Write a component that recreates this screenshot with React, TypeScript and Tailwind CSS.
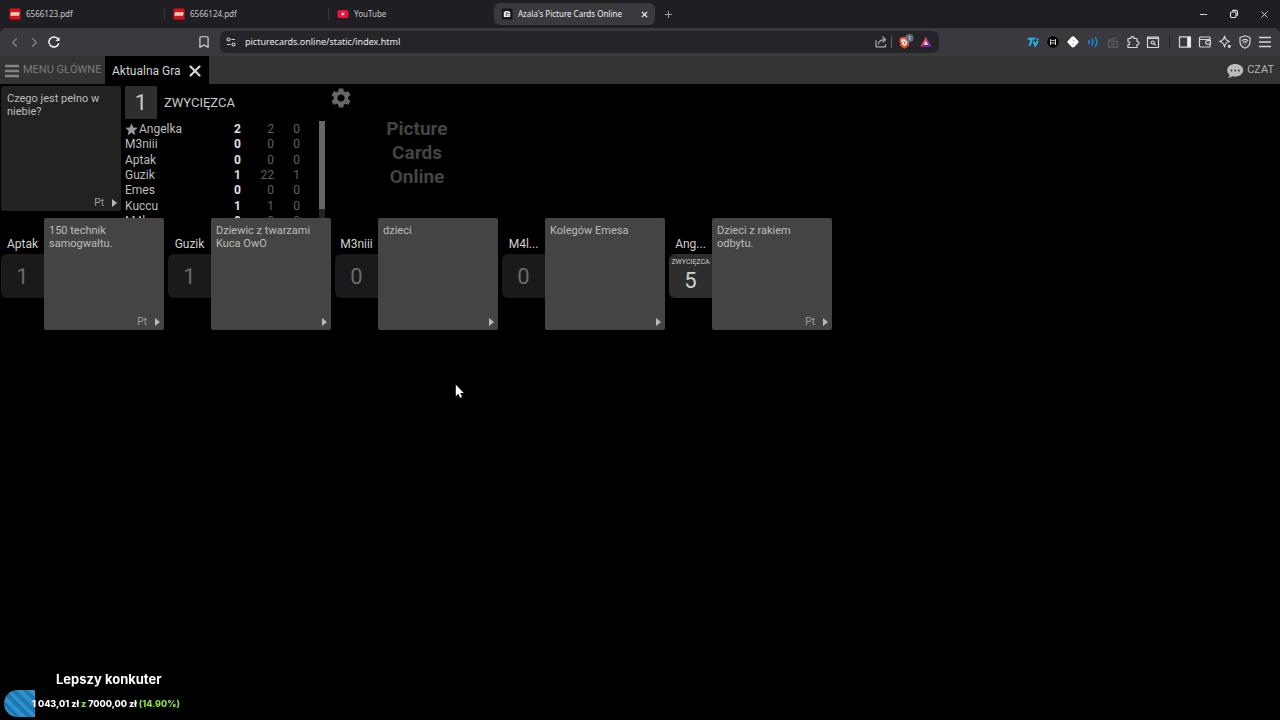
import type { ReactNode } from "react";
import {
  LuBookmark,
  LuChevronLeft,
  LuChevronRight,
  LuMinus,
  LuPlus,
  LuX,
} from "react-icons/lu";
import { MdSettings, MdStar } from "react-icons/md";

type Player = { name: string; points: number; played: number; won: number; leader?: boolean };
type Entry = { name: string; votes: number; text: string; pack?: boolean; winner?: boolean };

const players: Player[] = [
  { name: "Angelka", points: 2, played: 2, won: 0, leader: true },
  { name: "M3niii", points: 0, played: 0, won: 0 },
  { name: "Aptak", points: 0, played: 0, won: 0 },
  { name: "Guzik", points: 1, played: 22, won: 1 },
  { name: "Emes", points: 0, played: 0, won: 0 },
  { name: "Kuccu", points: 1, played: 1, won: 0 },
  { name: "M4lezer", points: 0, played: 0, won: 0 },
];

const entries: Entry[] = [
  { name: "Aptak", votes: 1, text: "150 technik samogwałtu.", pack: true },
  { name: "Guzik", votes: 1, text: "Dziewic z twarzami Kuca OwO" },
  { name: "M3niii", votes: 0, text: "dzieci" },
  { name: "M4l...", votes: 0, text: "Kolegów Emesa" },
  { name: "Ang...", votes: 5, text: "Dzieci z rakiem odbytu.", pack: true, winner: true },
];

function LegoIcon() {
  return (
    <svg viewBox="0 0 12 12" className="size-3 shrink-0" aria-hidden="true">
      <rect x=".5" y=".5" width="11" height="11" rx="1" fill="#d8121b" />
      <path d="M2 4.300h8.600L10 7.800H1.400z" fill="#f6dfc4" />
      <path d="M4 4.800 3.500 7.200M6.200 4.800l-.4 2.400M8.300 4.800l-.4 2.400" stroke="#d98a70" strokeWidth=".5" />
    </svg>
  );
}

function YoutubeIcon() {
  return (
    <svg viewBox="0 0 12 12" className="size-3 shrink-0" aria-hidden="true">
      <rect x=".5" y="2" width="11" height="8" rx="2" fill="#f0103c" />
      <path d="M4.8 4.2v3.6L8 6z" fill="#fff" />
    </svg>
  );
}

function Tab({ icon, title }: { icon: ReactNode; title: string }) {
  return (
    <div className="flex h-full w-[164px] items-center">
      <button className="flex min-w-0 flex-1 items-center gap-[5px] pl-2 text-left">
        {icon}
        <span className="truncate">{title}</span>
      </button>
      <span className="h-3 w-px bg-[#36353b]" />
    </div>
  );
}

function IconButton({ label, children }: { label: string; children: ReactNode }) {
  return (
    <button aria-label={label} className="flex h-5 w-5 shrink-0 items-center justify-center">
      {children}
    </button>
  );
}

function Glyph({ children }: { children: ReactNode }) {
  return (
    <svg
      viewBox="0 0 14 14"
      className="size-[14px]"
      fill="none"
      stroke="#d6d5da"
      strokeWidth="1.2"
      strokeLinecap="round"
      strokeLinejoin="round"
      aria-hidden="true"
    >
      {children}
    </svg>
  );
}

function Extensions() {
  return (
    <div className="flex items-center">
      <IconButton label="7TV">
        <svg viewBox="0 0 14 14" className="size-[14px]" fill="none" stroke="#29b6e8" strokeWidth="1.900" aria-hidden="true">
          <path d="M1.600 3.700h4.600L3.400 11M7.400 6.400l1.900 4.200 2.600-4.800M7.200 3.500h2.300M11 3.600l1.200 1.400" />
        </svg>
      </IconButton>
      <IconButton label="Cat">
        <svg viewBox="0 0 14 14" className="size-[14px]" aria-hidden="true">
          <circle cx="7" cy="7" r="5.800" fill="#000" />
          <path d="M4.500 10V4.300l1.200 1.300h2.600l1.200-1.300V10M4.500 8h5" fill="none" stroke="#e8e8e8" strokeWidth=".9" />
        </svg>
      </IconButton>
      <IconButton label="Diamond">
        <svg viewBox="0 0 14 14" className="size-[14px]" aria-hidden="true">
          <path d="M7 1.3c.6 0 1 .3 1.5.8l3.500 3.600c.8.8.8 1.600 0 2.400L8.500 11.800c-.9.9-2.100.9-3 0L2 8.100c-.8-.8-.8-1.600 0-2.400l3.500-3.600C6 1.600 6.400 1.300 7 1.300z" fill="#fff" />
          <path d="M6.500 4.800 8.700 6M6 8.600l1.500.8" fill="none" stroke="#9c9ca4" strokeWidth=".9" />
        </svg>
      </IconButton>
      <IconButton label="Sound">
        <svg viewBox="0 0 14 14" className="size-[14px]" fill="none" stroke="#1689d8" strokeWidth="1.500" strokeLinecap="round" aria-hidden="true">
          <path d="M2.800 5.500c.6 1 .6 2 0 3M6 4c1.300 2 1.300 4 0 6M9.300 2.600c2 2.800 2 6 0 8.800" />
        </svg>
      </IconButton>
      <IconButton label="Clapper">
        <svg viewBox="0 0 14 14" className="size-[14px]" fill="none" stroke="#5d5c62" strokeWidth="1.300" aria-hidden="true">
          <path d="M2.500 6.500h9v5.500h-9zM2.400 5.400l8.600-2.800M5 9.200h4" />
        </svg>
      </IconButton>
      <IconButton label="Extensions">
        <Glyph>
          <path d="M2 3.500h2.800c-.4-2.600 3.600-2.600 3.200 0h3v3c2.600-.4 2.600 3.400 0 3v3H2v-2.800c2.300.2 2.300-3.200 0-3z" />
        </Glyph>
      </IconButton>
      <IconButton label="Search tabs">
        <Glyph>
          <path d="M1.500 2h11v10.500h-11zM1.500 3.300h11" />
          <circle cx="6.800" cy="7.500" r="1.500" />
          <path d="m8 8.700 1.500 1.500" />
        </Glyph>
      </IconButton>
      <span className="mr-[5px] ml-[6px] h-3 w-px bg-[#222126]" />
      <IconButton label="Sidebar">
        <Glyph>
          <path d="M1.500 1.800h11v10.400h-11z" />
          <path d="M9.200 2h3v10h-3z" fill="#f1f1f3" stroke="none" />
        </Glyph>
      </IconButton>
      <IconButton label="Wallet">
        <Glyph>
          <path d="M12 4.500V2.800c0-.5-.4-.8-.8-.8H2.500c-.6 0-1 .4-1 1v8c0 .6.4 1 1 1h8.700c.5 0 .8-.3.800-.8V10M2 4.500h9.500M12.500 5.600H9.300c-2.200 0-2.200 3.600 0 3.600h3.200z" />
        </Glyph>
      </IconButton>
      <IconButton label="Assistant">
        <Glyph>
          <path d="M6.500 1.200c.5 3.200 1.700 4.600 5 5.300-3.300.7-4.500 2.100-5 5.300-.5-3.200-1.700-4.600-5-5.300 3.300-.7 4.500-2.100 5-5.300z" />
          <circle cx="11.300" cy="11.300" r="1" fill="#d6d5da" />
        </Glyph>
      </IconButton>
      <IconButton label="VPN">
        <Glyph>
          <path d="m7 .8 5 1.700v4.300c0 3-2 5.200-5 6.400-3-1.200-5-3.400-5-6.400V2.500z" />
          <path d="M4.300 5.500c1.700-1.300 3.700-1.300 5.400 0M5.200 7.200c1.200-.9 2.400-.9 3.600 0M7 9v.2" />
        </Glyph>
      </IconButton>
      <IconButton label="Browser menu">
        <Glyph>
          <path d="M1.500 2.500h11M1.500 7h11M1.500 11.500h11" strokeWidth="1.400" />
        </Glyph>
      </IconButton>
    </div>
  );
}

function Browser() {
  return (
    <header className="bg-[#1f1e23] font-['Noto_Sans',sans-serif] text-[8px] text-[#c9c8cd]">
      <div className="flex h-7 items-center pl-px">
        <Tab icon={<LegoIcon />} title="6566123.pdf" />
        <Tab icon={<LegoIcon />} title="6566124.pdf" />
        <div className="flex w-[165px] items-center">
          <button className="flex items-center gap-[5px] pl-2">
            <YoutubeIcon />
            <span>YouTube</span>
          </button>
        </div>
        <div className="flex h-[22px] w-[161px] items-center rounded-md bg-[#3a393e] pr-[6px] pl-[7px] text-[#f0f0f2]">
          <button className="flex flex-1 items-center gap-[5px]">
            <svg viewBox="0 0 12 12" className="size-3 shrink-0" aria-hidden="true">
              <rect x=".5" y=".5" width="11" height="11" rx="1" fill="#17161a" />
              <path d="M2.800 3.800h1l.6-.8h3.200l.6.8h1v5.200H2.800z" fill="#eee" />
              <path d="M4.600 4.800h1.800L5 8M7.800 4.800v1.400M7.800 7.400v.8" stroke="#17161a" strokeWidth=".8" fill="none" />
            </svg>
            <span>Azala's Picture Cards Online</span>
          </button>
          <button aria-label="Close tab">
            <LuX className="size-[9px]" strokeWidth={3} />
          </button>
        </div>
        <button aria-label="New tab" className="ml-2 text-[#aaa9ae]">
          <LuPlus className="size-[11px]" />
        </button>
        <div className="ml-auto flex items-center pr-[10px] text-[#e4e4e6]">
          <button aria-label="Minimize" className="mr-5">
            <LuMinus className="size-[11px]" />
          </button>
          <button aria-label="Restore" className="mr-5">
            <svg viewBox="0 0 10 10" className="size-[10px]" fill="none" stroke="currentColor" strokeWidth="1.100" aria-hidden="true">
              <rect x="1.500" y="3" width="5.500" height="5.500" rx="1.300" />
              <path d="M3.500 2.800V2c0-.3.300-.6.600-.6h2.800c.9 0 1.600.7 1.600 1.600v2.800c0 .4-.3.700-.7.700h-.5" />
            </svg>
          </button>
          <button aria-label="Close window">
            <LuX className="size-[11px]" />
          </button>
        </div>
      </div>

      <div className="flex h-7 items-center rounded-t-md bg-[#3a393e] pr-[5px] pl-1">
        <nav aria-label="History" className="flex items-center text-[#85848a]">
          <IconButton label="Back">
            <LuChevronLeft className="size-[15px]" />
          </IconButton>
          <IconButton label="Forward">
            <LuChevronRight className="size-[15px]" />
          </IconButton>
          <IconButton label="Reload">
            <svg viewBox="0 0 14 14" className="size-[14px]" fill="none" stroke="#f1f1f3" strokeWidth="1.500" aria-hidden="true">
              <path d="M11.800 8.200A5 5 0 1 1 10.600 3.500l1 1.100" />
              <path d="M12.500 2v4H8.500z" fill="#f1f1f3" stroke="none" />
            </svg>
          </IconButton>
        </nav>
        <div className="ml-[130px] flex items-center">
          <IconButton label="Bookmark">
            <LuBookmark className="size-[14px] text-[#dddce1]" />
          </IconButton>
        </div>
        <div className="mr-[84px] ml-[6px] flex h-[22px] min-w-0 flex-1 items-center rounded-md bg-[#252429] pr-px pl-1">
          <button aria-label="Site settings" className="mr-2 ml-px flex">
            <svg viewBox="0 0 12 12" className="size-3" fill="none" stroke="#cfced3" strokeWidth="1.100" aria-hidden="true">
              <circle cx="3.500" cy="3.500" r="1.500" />
              <circle cx="8.500" cy="8.500" r="1.500" />
              <path d="M6.300 3.500H10M2 8.500h3.700" />
            </svg>
          </button>
          <input
            aria-label="Address"
            defaultValue="picturecards.online/static/index.html"
            className="min-w-0 flex-1 bg-transparent text-[9px] text-[#e9e9ec] outline-none"
          />
          <IconButton label="Share">
            <Glyph>
              <path d="M2 5.500v6.300h9.500V9.500M4.300 9c.5-3 2.500-4.400 6.700-4.400M8.800 2l2.800 2.600L8.800 7.200" stroke="#a9a8ae" />
            </Glyph>
          </IconButton>
          <span className="h-3 w-px bg-[#65646a]" />
          <button aria-label="Brave Shields" className="ml-1 flex">
            <svg viewBox="0 0 18 18" className="size-[18px]" aria-hidden="true">
              <path d="M5 4h7l1.800 2.500L12.500 13 8.500 15.800 4.500 13 3.200 6.500z" fill="#f0502a" />
              <path d="m6 6 2.500.600L11 6l1 1.800-1.500 2 .2 1.700-2.200 1.300-2.200-1.300.2-1.700L5 7.800z" fill="#fff" />
              <path d="m7 8 1.500 1L10 8M8.500 9v2" stroke="#f0502a" fill="none" />
              <circle cx="13.500" cy="5" r="4" fill="#626c7c" />
              <path d="m12.900 3.900.8-.6v3.500" stroke="#e6e9ee" strokeWidth=".8" fill="none" />
            </svg>
          </button>
          <button aria-label="Rewards" className="mr-[6px] ml-[6px] flex">
            <svg viewBox="0 0 12 12" className="size-3" aria-hidden="true">
              <path d="M6 .8 .4 11h11.200z" fill="#9c2cab" />
              <path d="M6 .8.4 11 4 8.800 6 5z" fill="#ff4a22" />
              <path d="M.4 11h11.200L8 8.800H4z" fill="#6a2099" />
              <path d="M6 5 4 8.800h4z" fill="#fff" />
            </svg>
          </button>
        </div>
        <Extensions />
      </div>
    </header>
  );
}

function PlayArrow() {
  return (
    <svg viewBox="0 0 5 8" className="h-2 w-[5px]" aria-hidden="true">
      <path d="M0 0v8l5-4z" fill="#b8b8b8" />
    </svg>
  );
}

function CardFooter({ pack }: { pack?: boolean }) {
  return (
    <div className="flex h-3 items-center justify-end gap-2 text-[10px] leading-3 text-[#a0a0a0]">
      {pack && <span>Pt</span>}
      <button aria-label="Read aloud">
        <PlayArrow />
      </button>
    </div>
  );
}

function AppNav() {
  return (
    <nav className="flex h-7 items-center bg-[#333] text-[12px]">
      <button className="flex h-full w-[105px] items-center gap-1 pt-px pl-[5px] text-[11px] text-[#7b7b7b]">
        <svg viewBox="0 0 14 14" className="size-[14px] shrink-0" aria-hidden="true">
          <path d="M0 2h14M0 7h14M0 12h14" stroke="#858585" strokeWidth="2.600" />
        </svg>
        <span className="whitespace-nowrap">MENU GŁÓWNE</span>
      </button>
      <div className="flex h-full items-center gap-[5px] bg-black pt-px pr-[5px] pl-[7px] text-[#d2d2d2]">
        <button>Aktualna Gra</button>
        <button aria-label="Zamknij">
          <LuX className="size-[18px]" strokeWidth={3} />
        </button>
      </div>
      <button className="ml-auto flex items-center gap-[3px] pt-px pr-[6px] text-[11px] text-[#b5b5b5]">
        <svg viewBox="0 0 18 16" className="h-4 w-[18px]" aria-hidden="true">
          <path d="M9.200 1C4.700 1 1.200 3.700 1.200 7.300c0 2 1 3.700 2.500 4.800-.3 1-.9 1.900-1.900 2.600 1.800.1 3.300-.4 4.600-1.400.9.200 1.800.3 2.800.3 4.500 0 8-2.700 8-6.300S13.700 1 9.200 1z" fill="#bcbcbc" />
          <path d="M5.500 7.500h.01M9.200 7.500h.01M12.900 7.500h.01" stroke="#333" strokeWidth="1.800" strokeLinecap="round" />
        </svg>
        <span>CZAT</span>
      </button>
    </nav>
  );
}

function Scoreboard() {
  return (
    <div className="flex w-[200px] flex-col">
      <div className="flex items-center gap-[7px] text-[13px] text-[#c8c8c8]">
        <span className="flex h-[33px] w-8 items-center justify-center bg-[#2e2e2e] text-[22px]">1</span>
        <h2>ZWYCIĘZCA</h2>
      </div>
      <div className="mt-[2px] flex h-[97px] justify-between overflow-hidden">
        <table className="mt-px h-[107px] w-[175px] table-fixed text-[12px] leading-[15px] text-[#bebebe]">
          <tbody>
            {players.map((p) => (
              <tr key={p.name}>
                <th scope="row" className="w-[90px] p-0 text-left font-normal">
                  <span className="flex items-center">
                    {p.leader && <MdStar className="-ml-px size-[15px] text-[#999]" />}
                    {p.name}
                  </span>
                </th>
                <td className="w-[26px] p-0 text-right font-bold text-[#e0e0e0]">{p.points}</td>
                <td className="w-[33px] p-0 text-right text-[#626262]">{p.played}</td>
                <td className="w-[26px] p-0 text-right text-[#626262]">{p.won}</td>
              </tr>
            ))}
          </tbody>
        </table>
        <div className="h-full w-[6px] bg-[#242424]">
          <div className="h-[88px] bg-[#666]" />
        </div>
      </div>
    </div>
  );
}

function EntryCard({ entry }: { entry: Entry }) {
  return (
    <li className="flex">
      <div className="w-[43px] pt-[18px]">
        <div className="h-[18px] text-center text-[12px] leading-4 text-[#d0d0d0]">{entry.name}</div>
        {entry.winner ? (
          <div className="flex h-11 flex-col items-center rounded-l-md bg-[#2e2e2e] pt-1 text-[#d0d0d0]">
            <span className="text-[7px] leading-[9px]">ZWYCIĘZCA</span>
            <span className="text-[22px] leading-7">{entry.votes}</span>
          </div>
        ) : (
          <div className="flex h-11 items-center justify-center rounded-l-md bg-[#1a1a1a] text-[22px] text-[#6a6a6a]">
            {entry.votes}
          </div>
        )}
      </div>
      <article className="flex h-28 w-[120px] flex-col justify-between rounded-xs bg-[#444] pt-[6px] pr-1 pb-[2px] pl-[5px]">
        <p className="text-[11px] leading-[13px] text-[#bdbdbd]">{entry.text}</p>
        <CardFooter pack={entry.pack} />
      </article>
    </li>
  );
}

function Donations() {
  return (
    <aside className="fixed bottom-[3px] left-1 font-['Inter',sans-serif] font-bold text-white">
      <h3 className="pl-[52px] text-[13px] leading-[22px]">Lepszy konkuter</h3>
      <div className="flex h-[27px] items-center">
        <div className="h-full w-[31px] rounded-l-full bg-[repeating-linear-gradient(45deg,#1c78b4_0px,#1c78b4_4px,#3191cb_4px,#3191cb_8px)]" />
        <p className="-ml-[3px] text-[9px] font-extrabold whitespace-nowrap">
          1 043,01 zł <span className="text-[#8fe03a]">z</span> 7000,00 zł{" "}
          <span className="text-[#8fe03a]">(14.90%)</span>
        </p>
      </div>
    </aside>
  );
}

function Pointer() {
  return (
    <svg viewBox="0 0 10 15" className="pointer-events-none fixed top-[384px] left-[455px] h-[15px] w-[10px]" aria-hidden="true">
      <path d="M.8.800v11.400l2.600-2.400 1.700 4 1.900-.8-1.700-3.900h3.500z" fill="#fff" />
    </svg>
  );
}

export default function App() {
  return (
    <div className="min-h-screen bg-black font-['Roboto',sans-serif]">
      <Browser />
      <AppNav />
      <main>
        <section className="flex h-[134px] items-start pt-[2px] pl-px">
          <article className="flex h-[125px] w-[120px] flex-col justify-between rounded-xs bg-[#222] pt-[6px] pr-1 pb-[2px] pl-[6px]">
            <p className="text-[11px] leading-[13px] text-[#bdbdbd]">Czego jest pełno w niebie?</p>
            <CardFooter pack />
          </article>
          <div className="ml-1">
            <Scoreboard />
          </div>
          <button aria-label="Ustawienia" className="ml-1">
            <MdSettings className="size-6 text-[#666]" />
          </button>
          <h1 className="ml-[31px] w-[66px] pt-[31px] text-center text-[19px] leading-6 font-bold text-[#444]">
            Picture Cards Online
          </h1>
        </section>
        <ul className="flex flex-wrap gap-1 pl-px">
          {entries.map((entry) => (
            <EntryCard key={entry.name} entry={entry} />
          ))}
        </ul>
      </main>
      <Donations />
      <Pointer />
    </div>
  );
}
